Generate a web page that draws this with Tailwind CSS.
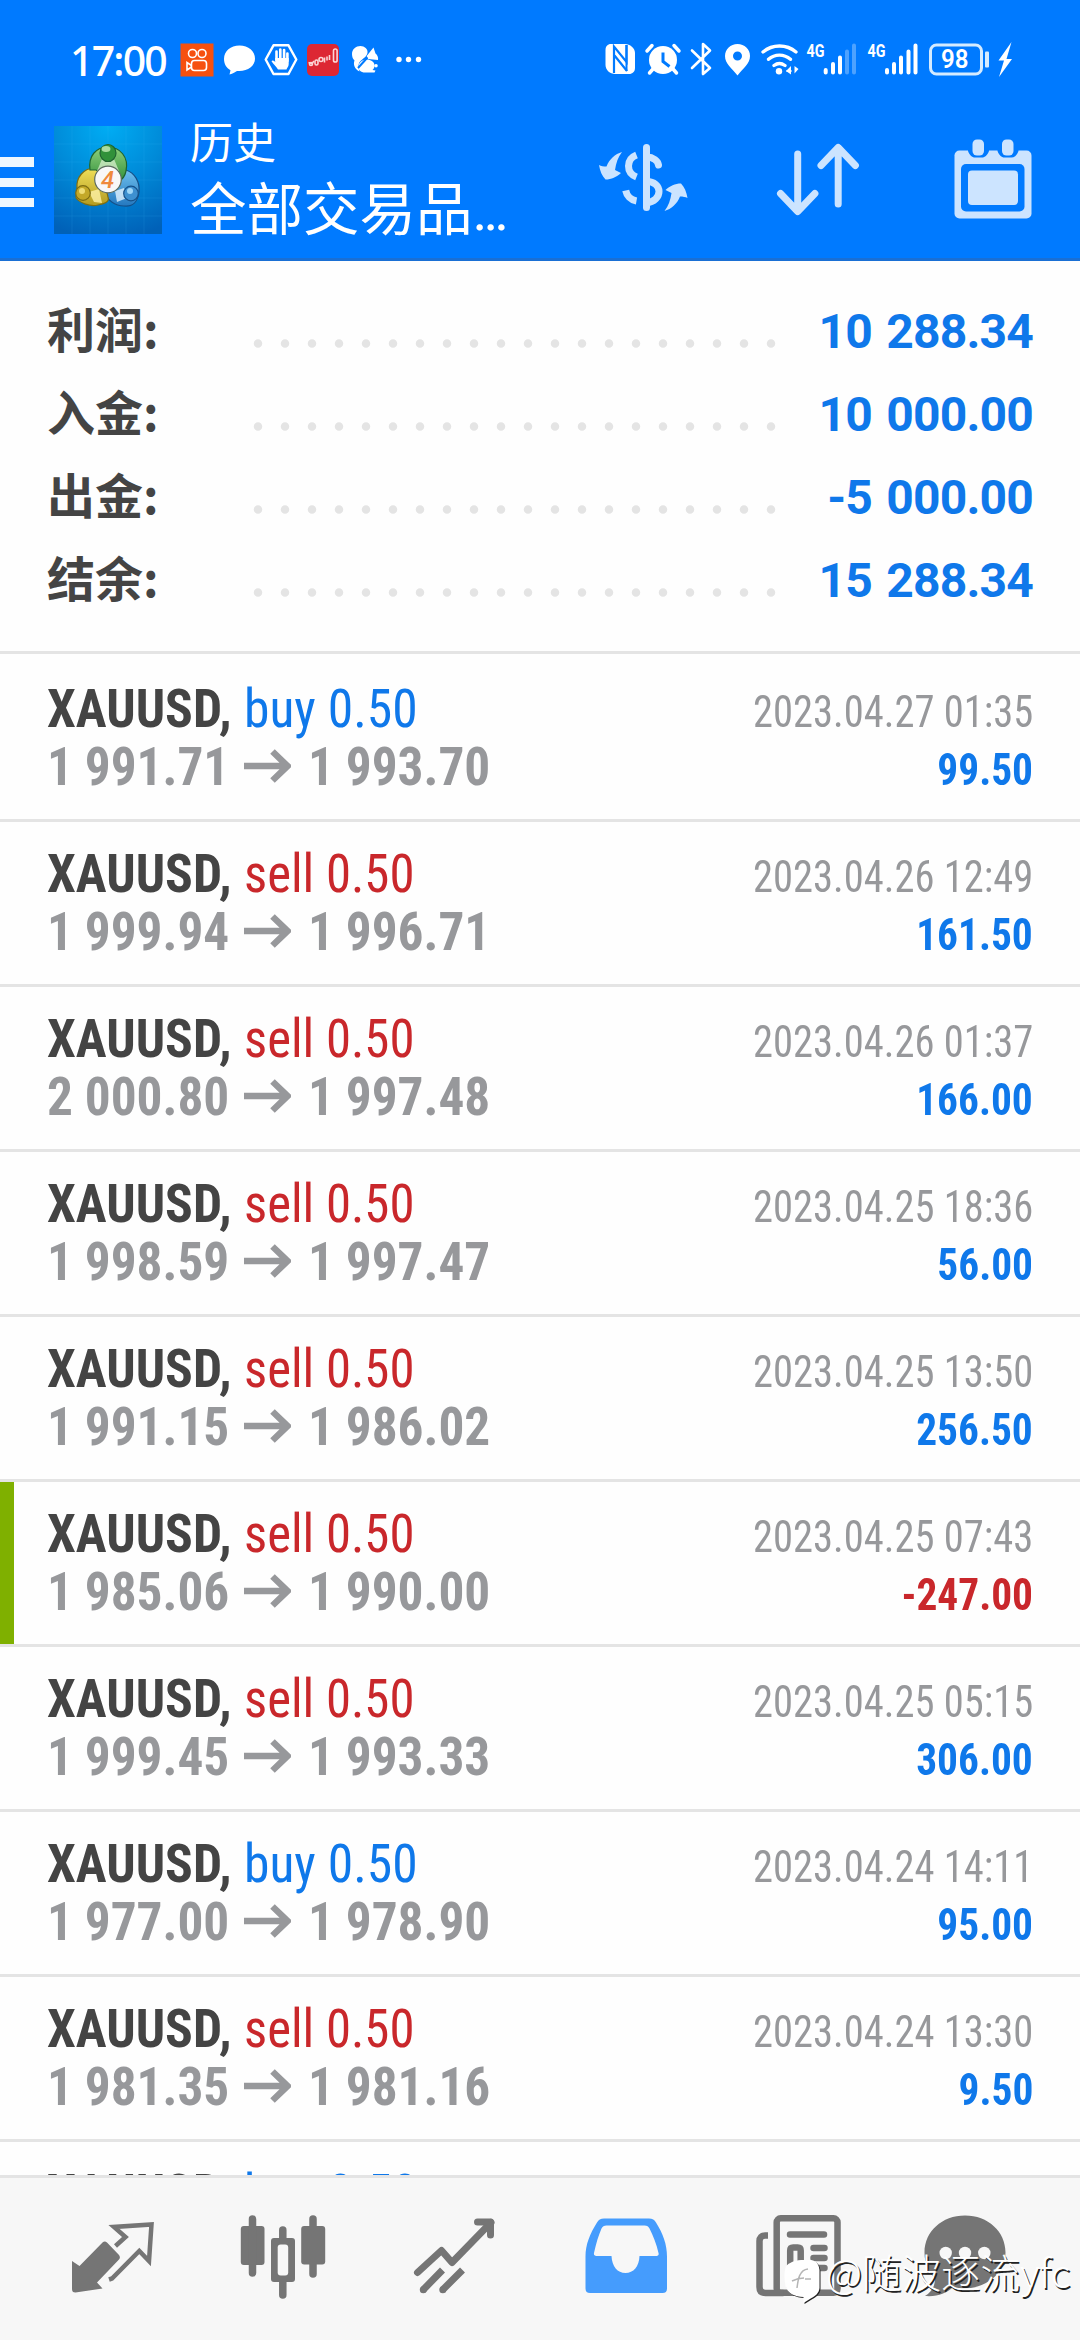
<!DOCTYPE html>
<html lang="zh-CN">
<head>
<meta charset="utf-8">
<title>历史</title>
<script src="https://cdn.jsdelivr.net/npm/@tailwindcss/browser@4"></script>
</head>
<body class="bg-white">
<div class="relative flex h-[2340px] w-[1080px] flex-col overflow-hidden bg-[#fefefe] font-['Roboto','Noto_Sans_CJK_SC',sans-serif]">

  <header class="flex h-[261px] shrink-0 flex-col border-b-[3px] border-[#1a6fd4] bg-[#007aff] text-white">
    <!-- status bar -->
    <div class="flex h-[120px] items-center pr-[68px] pl-[70px]">
      <span class="w-[108px] text-[41px] leading-none font-['Noto_Sans',sans-serif] font-medium tracking-[-1.8px]">17:00</span>
      <svg class="h-[36px] w-[246px]" viewBox="176 42 246 36" fill="none">
        <rect x="178.500" y="43.500" width="33" height="33" fill="#f6500f"/>
        <g stroke="#fff" stroke-width="1.600"><circle cx="190.500" cy="53.500" r="4"/><circle cx="200" cy="53.500" r="4"/><rect x="189.500" y="60.500" width="15" height="10" rx="3"/><path d="M189.500 65.500l-4.500-3v7.500l4.500-3"/></g>
        <path d="M237.500 45.500c-9 0-15.500 5.700-15.500 13.300 0 5.500 2.500 9.200 6.500 11.400l-1 4.300c3.500-.8 6-2.500 7.500-3.500 10 1 18-4.700 18-12.200 0-7.600-6.500-13.300-15.500-13.300z" fill="#fff"/>
        <path d="M271.500 45.300h15l7.800 14.200-7.800 14.500h-15l-7.800-14.500z" stroke="#fff" stroke-width="2.400" stroke-linejoin="round"/>
        <path d="M274.500 60V51.500M278.300 59V49.500M282.100 59V50M285.400 61V53.500" stroke="#fff" stroke-width="2.600" stroke-linecap="round"/>
        <path d="M273.200 58h13.500v6c0 3-2 4-2.200 5.500h-8.500c-1.500-3-4.500-5-6.500-8.300 1-1.700 3-.2 3.700.8z" fill="#fff"/>
        <rect x="305" y="44" width="32" height="32" rx="5" fill="#dd2733"/>
        <g stroke="#fbd5d5" stroke-width="1.600"><path d="M306.500 62.500l3.500 1 2-2.500"/><circle cx="309" cy="64" r="1.500"/><rect x="313" y="60" width="3" height="5" rx="1.500"/><circle cx="319" cy="59.500" r="2"/><path d="M322.500 57.500v5M325 56.500v4M327.500 55v5"/><rect x="331.500" y="49" width="3.600" height="13" rx="1.800"/></g>
        <g fill="#fff"><path d="M350 54c0-5 4-8 8.500-8 4 0 7.500 3 7 6.500-.5 4-4 5.500-7 8.500-2.500 2.500-2.500 6-1 10.500-5-2.500-6.500-7-5-11-1.500-1.300-2.500-3.500-2.500-6.500z"/><path d="M371.500 47.500l2 6c2 1.500 3 4 2.500 6.500l-10-1-1.300-3z"/><path d="M364.500 59.500c4.500 0 8 2.500 8 6 0 2-1 3.500-2 4.500l3 .5-1 2h-11c-4-1-5.500-3.500-5-6.500.6-3.500 3.600-6.500 8-6.500z"/><circle cx="374" cy="65.800" r="1.800"/>
        <circle cx="397" cy="59.500" r="2.700"/><circle cx="406.500" cy="59.500" r="2.700"/><circle cx="416.500" cy="59.500" r="2.700"/></g>
        <path d="M356 68l9.500-10.500" stroke="#007aff" stroke-width="2"/>
      </svg>
      <svg class="ml-auto h-[40px] w-[409px]" viewBox="602 40 409 40" fill="none">
        <path d="M610 44h14c5 0 10 4 10 9v15c0 3.500-2.500 6-6 6h-14c-5 0-9.500-4-9.500-9V50c0-3.500 2-6 5.500-6z" fill="#fff"/>
        <path d="M613 73V46.500L625.500 62V45M613.500 55.500L626 71" stroke="#007aff" stroke-width="2.200"/><path d="M625.500 45v26M613 47v26" stroke="#007aff" stroke-width="2"/>
        <circle cx="662" cy="60" r="14" fill="#fff"/><path d="M646 51l5-5.500M678 51l-5-5.500M652 69l-3.500 4M672 69l3.500 4" stroke="#fff" stroke-width="3.500" stroke-linecap="round"/><path d="M662 52.500v9l6.500 5" stroke="#007aff" stroke-width="3"/>
        <path d="M691 50.500l18 17.500-7 6V44l7 6.500L691 68" stroke="#fff" stroke-width="2.600" stroke-linejoin="round" stroke-linecap="round"/>
        <path fill-rule="evenodd" d="M736.500 44c-7 0-12.500 5.200-12.500 12 0 7.500 6.500 12 12.500 19.500 6-7.500 12.500-12 12.500-19.500 0-6.800-5.500-12-12.500-12zm0 7.500a4.500 4.500 0 1 1 0 9 4.500 4.500 0 0 1 0-9z" fill="#fff"/>
        <path d="M762 52c9.500-8 23.500-8 33 0M767.500 59.300c6.300-5.600 15.500-5.600 22 0M773 65.500c3.300-2.500 7.500-2.500 11 0" stroke="#fff" stroke-width="3.300" stroke-linecap="round"/><circle cx="778" cy="71.300" r="3.200" fill="#fff"/>
        <path d="M785 71l5-5v8.500M797.500 69l-4 4.500v-7.500l4 3z" fill="#fff"/><path d="M785.500 71h5" stroke="#fff" stroke-width="2"/>
        <text x="805.500" y="57" textLength="18" lengthAdjust="spacingAndGlyphs" font-size="18" font-weight="700" fill="#fff">4G</text>
        <path d="M824.700 70v2.500M832 64v8.500M839 57.500v15" stroke="#fff" stroke-width="4" stroke-linecap="round"/><path d="M846 51.500v21M853 45.500v27" stroke="#4da2ff" stroke-width="4" stroke-linecap="round"/>
        <text x="866.500" y="57" textLength="18" lengthAdjust="spacingAndGlyphs" font-size="18" font-weight="700" fill="#fff">4G</text>
        <path d="M886 70v2.500M893 64v8.500M900 57.500v15M907.500 51.500v21M914.500 45.500v27" stroke="#fff" stroke-width="4" stroke-linecap="round"/>
        <rect x="929.500" y="45" width="51" height="29" rx="6" stroke="#d5ebff" stroke-width="3"/><rect x="984" y="51.500" width="4" height="16" rx="1" fill="#d5ebff"/>
        <text x="940" y="68" textLength="27.500" lengthAdjust="spacingAndGlyphs" font-size="25" font-weight="600" fill="#fff">98</text>
        <path d="M1010.500 42l-13 18.500h5.500l-5 16.500 13-18h-5.500z" fill="#fff"/>
      </svg>
    </div>
    <!-- app bar -->
    <div class="flex h-[138px] items-start">
      <svg class="mt-[37px] h-[50px] w-[34px]" viewBox="0 0 34 50"><path d="M0 0h34v10H0zM0 21h34v9H0zM0 41h34v9H0z" fill="#eef7ff"/></svg>
      <svg class="mt-[6px] ml-[20px] h-[108px] w-[108px]" viewBox="0 0 108 108">
        <defs>
          <radialGradient id="bg" cx=".5" cy="0" r="1.050"><stop offset="0" stop-color="#00adf4"/><stop offset=".5" stop-color="#008ad8"/><stop offset="1" stop-color="#0061b8"/></radialGradient>
          <linearGradient id="gr" x2="0" y2="1"><stop offset="0" stop-color="#8fd07c"/><stop offset="1" stop-color="#2f8f3a"/></linearGradient>
          <linearGradient id="ye" x2="0" y2="1"><stop offset="0" stop-color="#f0e05a"/><stop offset="1" stop-color="#b39a20"/></linearGradient>
          <linearGradient id="bl" x2="0" y2="1"><stop offset="0" stop-color="#6fc0ee"/><stop offset="1" stop-color="#2478bf"/></linearGradient>
        </defs>
        <rect width="108" height="108" fill="url(#bg)"/>
        <path d="M18 0v108M36 0v108M54 0v108M72 0v108M90 0v108M0 18h108M0 36h108M0 54h108M0 72h108M0 90h108" stroke="#49c3ff" stroke-opacity=".13"/>
        <g stroke-width="1.200">
        <path d="M72 44c9 3 14 12 13 22-1 9-6 15-15 14-9 0-17-6-20-14l8-18z" fill="url(#bl)" stroke="#155088"/>
        <path d="M41 42c-12 0-19 10-18 20l-1 10c4 5 14 9 22 7 6-1 12-3 10-8l-5-22z" fill="url(#ye)" stroke="#7c6c12"/>
        <path d="M36 44c-2-14 6-23 18-23s21 10 18 24c-1 5-4 9-8 11L42 44z" fill="url(#gr)" stroke="#1f6430"/>
        <path d="M48 33h12l5 12H43z" fill="#dff3d6" stroke="none" opacity=".7"/><path d="M35 66l10-3 3 14-8-1z" fill="#fff3a8" stroke="none" opacity=".8"/><path d="M61 65l9-3 3 10-10 4z" fill="#e3f4ff" stroke="none" opacity=".8"/>
        <ellipse cx="54" cy="27" rx="8" ry="8.500" fill="#31913a" stroke="#1f6430"/><ellipse cx="52" cy="23" rx="4.500" ry="3" fill="#a9dba0" stroke="none"/>
        <circle cx="29" cy="67" r="7.300" fill="#c3a828" stroke="#7c6c12"/><circle cx="28" cy="65" r="3" fill="#eedc74" stroke="none"/>
        <circle cx="77" cy="67.500" r="7.300" fill="#3d90d0" stroke="#155088"/><circle cx="76" cy="65" r="3" fill="#9ed6f7" stroke="none"/>
        <circle cx="54" cy="53.500" r="13.300" fill="#f8f8f8" stroke="#5d6c60"/></g>
        <text x="53.500" y="62" text-anchor="middle" font-size="24" font-style="italic" font-weight="500" fill="#ef8a3c">4</text>
      </svg>
      <div class="ml-[28px] w-[331px]">
        <div class="-mt-px h-[58px] text-[43px] leading-[50px] font-normal">历史</div>
        <div class="text-[56.500px] leading-[68px] font-normal whitespace-nowrap">全部交易品<span class="tracking-[-4px]">...</span></div>
      </div>
      <svg class="mt-[19px] ml-[77px] h-[80px] w-[436px]" viewBox="597 139 436 80" fill="none">
        <g fill="#cce4ff">
          <path d="M621 152c-7 2-12.500 7-15.500 14.500-3 0-5.500-.5-7.500-1.500 1 6 3 11 6.500 14.500 6 0 11-2.500 15.500-6.500l-6-3c1-7 3-13 7-18z"/>
          <path d="M663.500 211c7-2 12.500-7 15.500-14.500 3 0 5.500.5 7.500 1.500-1-6-3-11-6.500-14.500-6 0-11 2.500-15.500 6.500l6 3c-1 7-3 13-7 18z"/>
        </g>
        <g stroke="#cce4ff" stroke-width="7">
          <path d="M645.500 147.500v60" stroke-linecap="round"/>
          <path d="M646 157c6 0 11 4 11.500 8" stroke-linecap="round"/><path d="M646 181.500c7 0 12 4.500 12 10s-5 11-12 11"/>
          <path d="M635.500 155c-5 2-8 6-8 11s3 9 8 11M624.700 190.500c1 5 5 9.500 10.800 10.500"/>
        </g>
        <g stroke="#cce4ff" stroke-width="7" stroke-linecap="round" stroke-linejoin="round">
          <path d="M796.700 154v56M779.500 193.500l17.200 18 17.200-18M837.200 204v-55M820 165.500l17.200-18 17.200 18"/>
        </g>
        <rect x="953.500" y="150.500" width="77" height="68" rx="5" fill="#cce4ff"/>
        <rect x="960" y="164" width="63.500" height="47.500" rx="5" fill="#007aff"/>
        <rect x="967" y="170.500" width="50" height="34.500" rx="4" fill="#cce4ff"/>
        <path d="M967 150h21v1c-1.500 4-4 6.500-7 6.500h-7c-3 0-5.500-2.500-7-6.500zM996.500 150h21v1c-1.500 4-4 6.500-7 6.500h-7c-3 0-5.500-2.500-7-6.500z" fill="#007aff"/>
        <rect x="971.500" y="139.500" width="11.500" height="16" rx="4.500" fill="#cce4ff"/><rect x="1001" y="139.500" width="11.500" height="16" rx="4.500" fill="#cce4ff"/>
      </svg>
    </div>
  </header>

  <section id="stats" class="shrink-0 border-b-[3px] border-[#e4e4e4] pt-[25px] pr-[47px] pb-[33px] pl-[47px]"></section>

  <main class="min-h-0 flex-1 overflow-hidden pt-[3px]">
    <div id="deals" class="font-['Roboto_Condensed',Roboto,sans-serif]"></div>
  </main>

  <nav class="flex h-[165px] shrink-0 items-center border-t-[3px] border-[#e4e4e4] bg-[#f7f7f7]">
    <svg class="h-[162px] w-[1080px]" viewBox="0 2178 1080 162" fill="none">
      <g fill="#757575">
        <path d="M72 2261l7.500 5 23-23.500c1.500-1.500 3-1.500 4.500 0l12 12.500c1.200 1.500 1.200 3 0 4.500l-22 23 5.500 6-27 4c-2.500 0-3.500-1-3.500-3.500z"/>
        <rect x="240.800" y="2226" width="23.700" height="39" rx="3"/><rect x="271" y="2238" width="24" height="44" rx="3"/><rect x="301.200" y="2226" width="24" height="38.500" rx="3"/>
      </g>
      <g stroke="#757575">
        <path d="M109 2279.500l3-1 27.300-27.500 9.700 10 2.500-36.500-37.500 2.500 11.500 10-10 9" stroke-width="4.500"/>
        <path d="M252.500 2219v54M282.800 2230v65M313 2219v55" stroke-width="7.500" stroke-linecap="round"/>
        <path d="M417.500 2272.500l24-22 10.500 12 39-40" stroke-width="7" stroke-linejoin="round" stroke-linecap="round"/>
        <path d="M477.500 2222h13v13" stroke-width="7" stroke-linecap="round" stroke-linejoin="round"/>
        <path d="M442.500 2270l-19.500 20M462.500 2270l-20 20" stroke-width="7"/><circle cx="423.300" cy="2289.700" r="3.500" fill="#757575" stroke="none"/><circle cx="442.800" cy="2289.700" r="3.500" fill="#757575" stroke="none"/>
      </g>
      <rect x="277.700" y="2244.500" width="10.500" height="31" rx="3" fill="#f7f7f7"/>
      <path fill-rule="evenodd" d="M604 2218.500h45c3.500 0 5.500 1.300 7 4 7 11 11 22 11 34v32c0 3-1.500 4.500-4.500 4.500h-72.500c-3 0-4.500-1.500-4.500-4.500v-32c0-12 4.500-23 11.500-34 1.500-2.700 3.500-4 7-4zm2.500 7c-2.500 0-4 1-5 3-3 7-5.500 15-7.500 24.500-.4 2 .5 3 2.500 3h15c.5 10.500 6 17 14 17s13.700-6.500 14-17h16c2.500 0 3.600-1 3-3-2-9-5.500-17.500-9-24.500-1-2-2.300-3-5-3z" fill="#459cfd"/>
      <g stroke="#757575" stroke-width="6.500">
        <rect x="776.700" y="2218.300" width="60.800" height="74.500" rx="4"/>
        <path d="M768 2235.500h-3c-3.500 0-5.500 2-5.500 5.500v46c0 4 2 6 6 6h18"/>
        <g stroke-linecap="round"><path d="M790 2234.500h34M813.500 2248h11M813.500 2258h11M813.500 2268h11"/></g>
        <path d="M790.200 2270v-19.500c0-2 1-3 3-3h4.500c2 0 3 1 3 3V2270"/>
      </g>
      <path d="M965 2215.500c-23 0-40.500 16-40.500 37 0 11 4 19.500 10.500 26 0 8-3.500 13.500-10 17.500 13 1 21-3 27-8 31 4.500 53.500-13 53.500-35.500 0-21-17.500-37-40.500-37z" fill="#757575"/>
      <g fill="#f7f7f7"><circle cx="945.700" cy="2253" r="6.200"/><circle cx="965" cy="2253" r="6.200"/><circle cx="984.300" cy="2253" r="6.200"/></g>
    </svg>
  </nav>

  <!-- watermark -->
  <div class="absolute top-[2254px] left-[782px] flex h-[52px] items-center">
    <svg class="h-[52px] w-[44px] drop-shadow-[1.5px_1.5px_0px_#222]" viewBox="782 2254 44 52" fill="none">
      <path d="M786 2266c3-3 8-5.500 15-6h10c6 1 8 5 8.500 10v18c-.5 5-4 8-8 10l-8 5 0-6c-9 0-16-4-18-11-1.500-7-1.500-14 .5-20z" fill="#fff"/>
      <path d="M797 2288c1-8 2-18 11-19M792 2281c4-2 8-3 12-3M805 2279h6" stroke="#b5b5b5" stroke-width="1.500"/>
    </svg>
    <span class="-mt-[19px] text-[39.5px] leading-[52px] font-light whitespace-nowrap text-white font-['Noto_Sans_CJK_SC',sans-serif] [text-shadow:1.500px_1.500px_0.500px_#222]">@随波逐流yfc</span>
  </div>
</div>

<script>
  const totals = [['利润', '10 288.34'], ['入金', '10 000.00'], ['出金', '-5 000.00'], ['结余', '15 288.34']];
  document.getElementById('stats').innerHTML = totals.map(([k, v]) => `
    <div class="flex h-[83px] items-baseline text-[48px] leading-[83px] font-bold">
      <span class="w-[205px] font-['Noto_Sans_CJK_SC',sans-serif] leading-[83px] text-[#444444]">${k}:</span>
      <svg class="mb-[6px] h-[9px] w-[530px]" viewBox="0 0 530 9"><path d="M6 4.500h514" stroke="#e4e4e4" stroke-width="8.500" stroke-linecap="round" stroke-dasharray="0 27"/></svg>
      <span class="ml-auto tracking-[-0.8px] text-[#0f78ea] [word-spacing:3px]">${v}</span>
    </div>`).join('');

  const deals = [
    ['buy', '1 991.71', '1 993.70', '2023.04.27 01:35', '99.50'],
    ['sell', '1 999.94', '1 996.71', '2023.04.26 12:49', '161.50'],
    ['sell', '2 000.80', '1 997.48', '2023.04.26 01:37', '166.00'],
    ['sell', '1 998.59', '1 997.47', '2023.04.25 18:36', '56.00'],
    ['sell', '1 991.15', '1 986.02', '2023.04.25 13:50', '256.50'],
    ['sell', '1 985.06', '1 990.00', '2023.04.25 07:43', '-247.00'],
    ['sell', '1 999.45', '1 993.33', '2023.04.25 05:15', '306.00'],
    ['buy', '1 977.00', '1 978.90', '2023.04.24 14:11', '95.00'],
    ['sell', '1 981.35', '1 981.16', '2023.04.24 13:30', '9.50'],
    ['buy', '', '', '', '']
  ];
  const blue = 'text-[#0f78ea] scale-x-[0.955]', red = 'text-[#c9272b] scale-x-[0.94]';
  document.getElementById('deals').innerHTML = deals.map(([side, from, to, time, profit]) => `
    <div class="flex h-[165px] border-b-[3px] border-[#e4e4e4]">
      <div class="w-[14px] ${profit[0] === '-' ? 'bg-[#7fb000]' : ''}"></div>
      <div class="flex-1 pt-[23px] pr-[47px] pl-[33px] text-[54px] leading-[58px]">
        <div class="flex h-[58px] items-baseline">
          <span class="w-[198px] origin-left scale-x-[0.955] font-bold text-[#444444]">XAUUSD,</span>
          <span class="-ml-px origin-left ${side === 'buy' ? blue : red}">${side} 0.50</span>
          <span class="ml-auto origin-right scale-x-[0.9] text-[45px] text-[#97989b]">${time}</span>
        </div>
        ${from && `<div class="flex h-[58px] items-baseline font-bold text-[#97989b]">
          <span class="w-[197px] origin-left scale-x-[0.95]">${from}</span>
          <svg class="h-[37px] w-[47px]" viewBox="0 0 47 37" fill="none"><path d="M0 18h44M28.500 3.500L43.500 18 28.500 32.500" stroke="#97989b" stroke-width="6.500"/></svg>
          <span class="ml-[17px] origin-left scale-x-[0.95]">${to}</span>
          <span class="ml-auto origin-right scale-x-[0.92] text-[45px] ${profit[0] === '-' ? 'text-[#c9272b]' : 'text-[#0f78ea]'}">${profit}</span>
        </div>`}
      </div>
    </div>`).join('');
</script>
</body>
</html>
